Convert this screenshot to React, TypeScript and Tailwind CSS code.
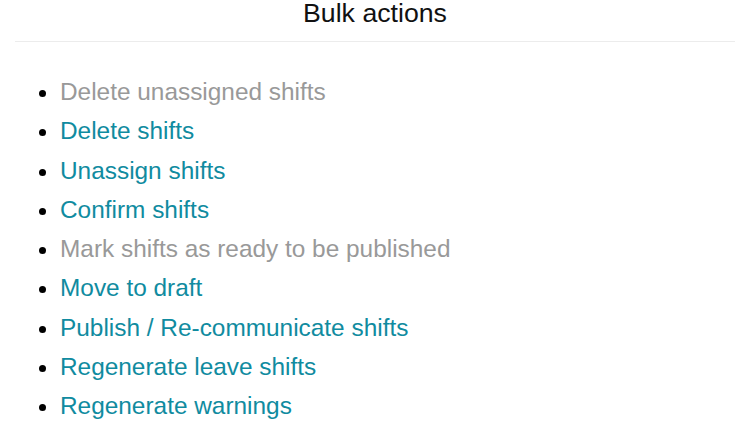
const actions: { label: string; disabled?: boolean }[] = [
  { label: 'Delete unassigned shifts', disabled: true },
  { label: 'Delete shifts' },
  { label: 'Unassign shifts' },
  { label: 'Confirm shifts' },
  { label: 'Mark shifts as ready to be published', disabled: true },
  { label: 'Move to draft' },
  { label: 'Publish / Re-communicate shifts' },
  { label: 'Regenerate leave shifts' },
  { label: 'Regenerate warnings' },
];

export default function App() {
  return (
    <div className="w-[750px] h-[439px] bg-white overflow-hidden font-['Liberation_Sans',Arial,sans-serif]">
      {/* Header */}
      <div className="mx-[15px] border-b border-[#ececec] pb-[14px]">
        <h2 className="text-center text-[26.7px] leading-[27px] text-[#111]">Bulk actions</h2>
      </div>

      {/* Actions */}
      <ul className="list-disc mt-[30px] pl-[60px]">
        {actions.map((a) => (
          <li key={a.label} className="text-[24.4px] leading-[39.3px] marker:text-black">
            <a
              href="#"
              className={a.disabled ? 'text-[#999999] cursor-default' : 'text-[#108ba0] hover:underline'}
            >
              {a.label}
            </a>
          </li>
        ))}
      </ul>
    </div>
  );
}
